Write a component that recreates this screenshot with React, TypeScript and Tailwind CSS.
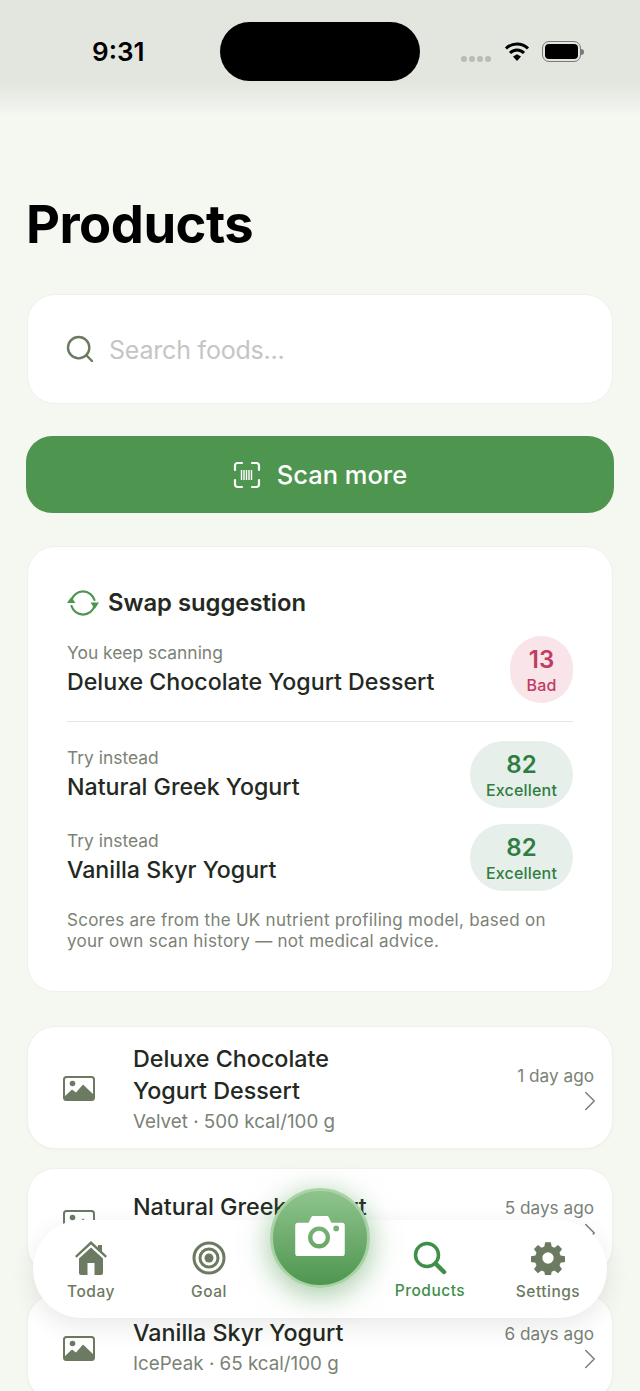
import { ChevronRight, Search } from 'lucide-react';

const FONT = { fontFamily: 'Inter, "Liberation Sans", sans-serif' };

function ImageIcon() {
  return (
    <svg width="32" height="25" viewBox="0 0 32 25" className="flex-none">
      <rect x="1" y="1" width="30" height="23" rx="2.5" fill="#fff" stroke="#6b7a60" strokeWidth="2" />
      <circle cx="9.5" cy="7.500" r="2.800" fill="#6b7a60" />
      <path d="M1 21l8-7.500 4 3 7-8L31 19v3a2.500 2.500 0 01-2.500 2.500h-25A2.500 2.500 0 011 22z" fill="#6b7a60" />
    </svg>
  );
}

function ScanIcon() {
  return (
    <svg width="28" height="28" viewBox="0 0 28 28" fill="none" stroke="#fff" strokeWidth="2.200" strokeLinecap="round">
      <path d="M9 2H4.500A2.500 2.500 0 002 4.500V9M19 2h4.500A2.500 2.500 0 0126 4.500V9M9 26H4.500A2.500 2.500 0 012 23.500V19M19 26h4.500a2.500 2.500 0 002.500-2.500V19" />
      <path d="M8.500 9v10M11 9v10M13.500 9v10M16 9v10M18.500 9v10" strokeWidth="1.400" strokeLinecap="butt" />
    </svg>
  );
}

function SwapIcon() {
  return (
    <svg width="32" height="30" viewBox="0 0 32 30" fill="none" stroke="#4e9650" strokeWidth="2.200" strokeLinecap="round" className="flex-none">
      <path d="M4.500 12A12 12 0 0127.500 12" />
      <path d="M27.500 18A12 12 0 014.500 18" />
      <path d="M0 15L4.200 9l4.300 6z" fill="#4e9650" stroke="none" />
      <path d="M23.500 14.500h8.500L27.800 21z" fill="#4e9650" stroke="none" />
    </svg>
  );
}

function ScorePill({ score, label, bad }: { score: number; label: string; bad?: boolean }) {
  return (
    <div
      className={`flex h-[67px] flex-none flex-col items-center justify-center rounded-full ${
        bad ? 'w-[63px] bg-[#f8e4e9] text-[#c23b62]' : 'w-[103px] bg-[#e7efea] text-[#2f7d43]'
      }`}
    >
      <span className="text-[24px] leading-[30px] font-semibold">{score}</span>
      <span className="text-[16px] leading-[20px] font-medium tracking-[0.2px]">{label}</span>
    </div>
  );
}

function SwapRow({ name }: { name: string }) {
  return (
    <div className="flex h-[67px] items-center justify-between">
      <div className="mb-[2px]">
        <p className="text-[17.400px] leading-[22px] text-[#7b8276]">Try instead</p>
        <p className="mt-[4px] text-[23.200px] leading-[28px] font-medium text-[#24291f]">{name}</p>
      </div>
      <ScorePill score={82} label="Excellent" />
    </div>
  );
}

function ProductRow({ title, sub, when }: { title: string[]; sub: string; when: string }) {
  const lift = title.length > 1 ? '' : 'mb-[4px]';
  return (
    <div className="flex min-h-[107px] items-center rounded-[28px] border border-[#f0f1ec] bg-white pt-[14px] pr-[18px] pb-[13px] pl-[35px] shadow-[0_1px_3px_rgba(30,40,20,0.03)]">
      <ImageIcon />
      <div className={`ml-[38px] min-w-0 flex-1 pt-[2px] ${lift}`}>
        {title.map((line) => (
          <p key={line} className="text-[23.300px] leading-[32px] font-medium text-[#24291f]">
            {line}
          </p>
        ))}
        <p className="mt-[2px] text-[18.800px] leading-[26px] text-[#7b8276]">{sub}</p>
      </div>
      <div className={`flex flex-col items-end gap-[2px] text-[#7b8276] ${lift}`}>
        <span className="text-[17.200px] leading-[24px]">{when}</span>
        <ChevronRight size={34} strokeWidth={1.100} className="-my-[6px] -mr-[13px]" />
      </div>
    </div>
  );
}

function TabItem({ label, active, children }: { label: string; active?: boolean; children: React.ReactNode }) {
  return (
    <div className={`flex w-[110px] flex-col items-center ${active ? 'text-[#3f8f4a]' : 'text-[#6b7a60]'}`}>
      <div className="flex h-[36px] items-center justify-center">{children}</div>
      <span className={`text-[15.500px] leading-[20px] font-medium tracking-[0.5px] ${active ? 'mt-[5px]' : 'mt-[6px]'}`}>
        {label}
      </span>
    </div>
  );
}

export default function App() {
  return (
    <div style={FONT} className="relative h-[1391px] w-[640px] overflow-hidden bg-[#f4f8f1]">
      <div className="flex h-[116px] items-start justify-between bg-gradient-to-b from-[#e3e5df] from-70% to-[#f4f8f1] pt-[22px] pr-[56px] pl-[92px]">
        <span className="mt-[14px] text-[26px] leading-[32px] font-semibold text-black">9:31</span>
        <div className="absolute top-[22px] left-[220px] h-[59px] w-[200px] rounded-full bg-black" />
        <div className="mt-[19px] flex items-center">
          <div className="mt-[14px] mr-[13px] flex gap-[2px]">
            <i className="h-[6px] w-[6px] rounded-full bg-[#b9bbb6]" />
            <i className="h-[6px] w-[6px] rounded-full bg-[#b9bbb6]" />
            <i className="h-[6px] w-[6px] rounded-full bg-[#b9bbb6]" />
            <i className="h-[6px] w-[6px] rounded-full bg-[#b9bbb6]" />
          </div>
          <svg width="26" height="21" viewBox="0 0 26 21" fill="none" stroke="#000" strokeWidth="3">
            <path d="M2 7.500a15.500 15.500 0 0122 0M6 12a9.500 9.500 0 0114 0" />
            <path d="M9 15.500l4-2.200 4 2.200-4 4.500z" fill="#000" stroke="none" />
          </svg>
          <div className="ml-[12px] flex items-center">
            <div className="h-[21px] w-[39px] rounded-[7px] border-[1.500px] border-[#77797a] p-[2px]">
              <div className="h-full w-full rounded-[4px] bg-black" />
            </div>
            <div className="h-[6px] w-[3px] rounded-r-full bg-[#77797a]" />
          </div>
        </div>
      </div>

      <div className="px-[26px]">
        <h1 className="mt-[78px] text-[52.500px] leading-[60px] font-bold tracking-[-0.5px] text-black">Products</h1>

        <div className="mx-px mt-[40px] flex h-[110px] items-center rounded-[28px] border border-[#f0f1ec] bg-white pl-[36px]">
          <Search size={32} strokeWidth={1.800} className="text-[#6b7a60]" />
          <span className="mt-[3px] ml-[13px] text-[25px] tracking-[-0.2px] text-[#c5c6c3]">Search foods...</span>
        </div>

        <button className="mt-[32px] flex h-[77px] w-full items-center justify-center gap-[16px] rounded-[26px] bg-[#4e9650] text-[25.500px] font-medium text-white">
          <ScanIcon />
          <span className="mt-[2px]">Scan more</span>
        </button>

        <section className="mx-px mt-[33px] h-[446px] rounded-[28px] border border-[#f0f1ec] bg-white px-[39px] pt-[41px]">
          <div className="flex items-center gap-[9px]">
            <SwapIcon />
            <h2 className="text-[23.800px] leading-[30px] font-semibold text-[#24291f]">Swap suggestion</h2>
          </div>
          <div className="mt-[18px] flex items-center justify-between border-b border-[#e2e4df] pb-[18px]">
            <div className="mb-[2px]">
              <p className="text-[17.400px] leading-[22px] text-[#7b8276]">You keep scanning</p>
              <p className="mt-[4px] text-[23.200px] leading-[28px] font-medium text-[#24291f]">
                Deluxe Chocolate Yogurt Dessert
              </p>
            </div>
            <ScorePill score={13} label="Bad" bad />
          </div>
          <div className="mt-[19px] flex flex-col gap-[16px]">
            <SwapRow name="Natural Greek Yogurt" />
            <SwapRow name="Vanilla Skyr Yogurt" />
          </div>
          <p className="mt-[19px] text-[17px] leading-[21px] tracking-[0.27px] text-[#7b8276]">
            Scores are from the UK nutrient profiling model, based on your own scan history — not medical advice.
          </p>
        </section>

        <div className="mx-px mt-[34px] flex flex-col gap-[19px]">
          <ProductRow title={['Deluxe Chocolate', 'Yogurt Dessert']} sub="Velvet · 500 kcal/100 g" when="1 day ago" />
          <ProductRow title={['Natural Greek Yogurt']} sub="Fage · 97 kcal/100 g" when="5 days ago" />
          <ProductRow title={['Vanilla Skyr Yogurt']} sub="IcePeak · 65 kcal/100 g" when="6 days ago" />
        </div>
      </div>

      {/* floating tab bar over the list */}
      <div className="absolute top-[1220px] left-[33px] flex h-[98px] w-[574px] items-center justify-between rounded-full bg-white px-[3px] pt-[4px] shadow-[0_8px_24px_rgba(30,40,20,0.10)]">
        <div className="flex gap-[8px]">
          <TabItem label="Today">
            <svg width="34" height="36" viewBox="0 0 34 36" fill="currentColor">
              <path d="M17 1L1 16l1.500 1.700L17 4.500l14.500 13.200L33 16l-5-4.700V5h-4v2.600z" />
              <path d="M5 18.500L17 7.500l12 11V33a2 2 0 01-2 2H7a2 2 0 01-2-2zM13.500 23v12h7V23z" fillRule="evenodd" />
            </svg>
          </TabItem>
          <TabItem label="Goal">
            <svg width="34" height="34" viewBox="0 0 34 34" fill="none" stroke="currentColor" strokeWidth="3">
              <circle cx="17" cy="17" r="15" />
              <circle cx="17" cy="17" r="9" />
              <circle cx="17" cy="17" r="4.500" fill="currentColor" stroke="none" />
            </svg>
          </TabItem>
        </div>
        <div className="mr-px flex gap-[8px]">
          <TabItem label="Products" active>
            <svg width="34" height="34" viewBox="0 0 34 34" fill="none" stroke="currentColor" strokeWidth="3.500" strokeLinecap="round">
              <circle cx="14" cy="14" r="11.500" />
              <path d="M22.500 22.500L31 31" strokeWidth="4.500" />
            </svg>
          </TabItem>
          <TabItem label="Settings">
            <svg width="34" height="34" viewBox="0 0 24 24" fill="currentColor">
              <path
                fillRule="evenodd"
                d="M10 .8h4l.6 3.100 1.900.8 2.600-1.800 2.800 2.800-1.800 2.600.8 1.900 3.100.6v4l-3.100.6-.8 1.900 1.800 2.600-2.800 2.800-2.600-1.800-1.900.8-.6 3.100h-4l-.6-3.100-1.900-.8-2.600 1.800-2.800-2.800 1.800-2.600-.8-1.900-3.100-.6v-4l3.100-.6.8-1.900L2.100 5.700l2.800-2.800 2.600 1.800 1.900-.8zM12 8a4 4 0 100 8 4 4 0 000-8z"
              />
            </svg>
          </TabItem>
        </div>
      </div>

      {/* camera button */}
      <div className="absolute top-[1188px] left-[270px] flex h-[100px] w-[100px] items-center justify-center rounded-full border-[3px] border-[#a9d3a6] bg-gradient-to-b from-[#8fc48d] to-[#4e9650] shadow-[0_6px_30px_rgba(78,150,80,0.55)]">
        <svg width="50" height="40" viewBox="0 0 52 42" className="-mt-[4px]">
          <path
            fill="#fff"
            fillRule="evenodd"
            d="M3 7h11l3-6a2 2 0 011.500-1h15a2 2 0 011.500 1l3 6h11a3 3 0 013 3v29a3 3 0 01-3 3H3a3 3 0 01-3-3V10a3 3 0 013-3zM25 11a11.500 11.500 0 100 23 11.500 11.500 0 000-23zM25 15.500a7 7 0 110 14 7 7 0 010-14zM43 10a3 3 0 100 6 3 3 0 000-6z"
          />
        </svg>
      </div>
    </div>
  );
}
